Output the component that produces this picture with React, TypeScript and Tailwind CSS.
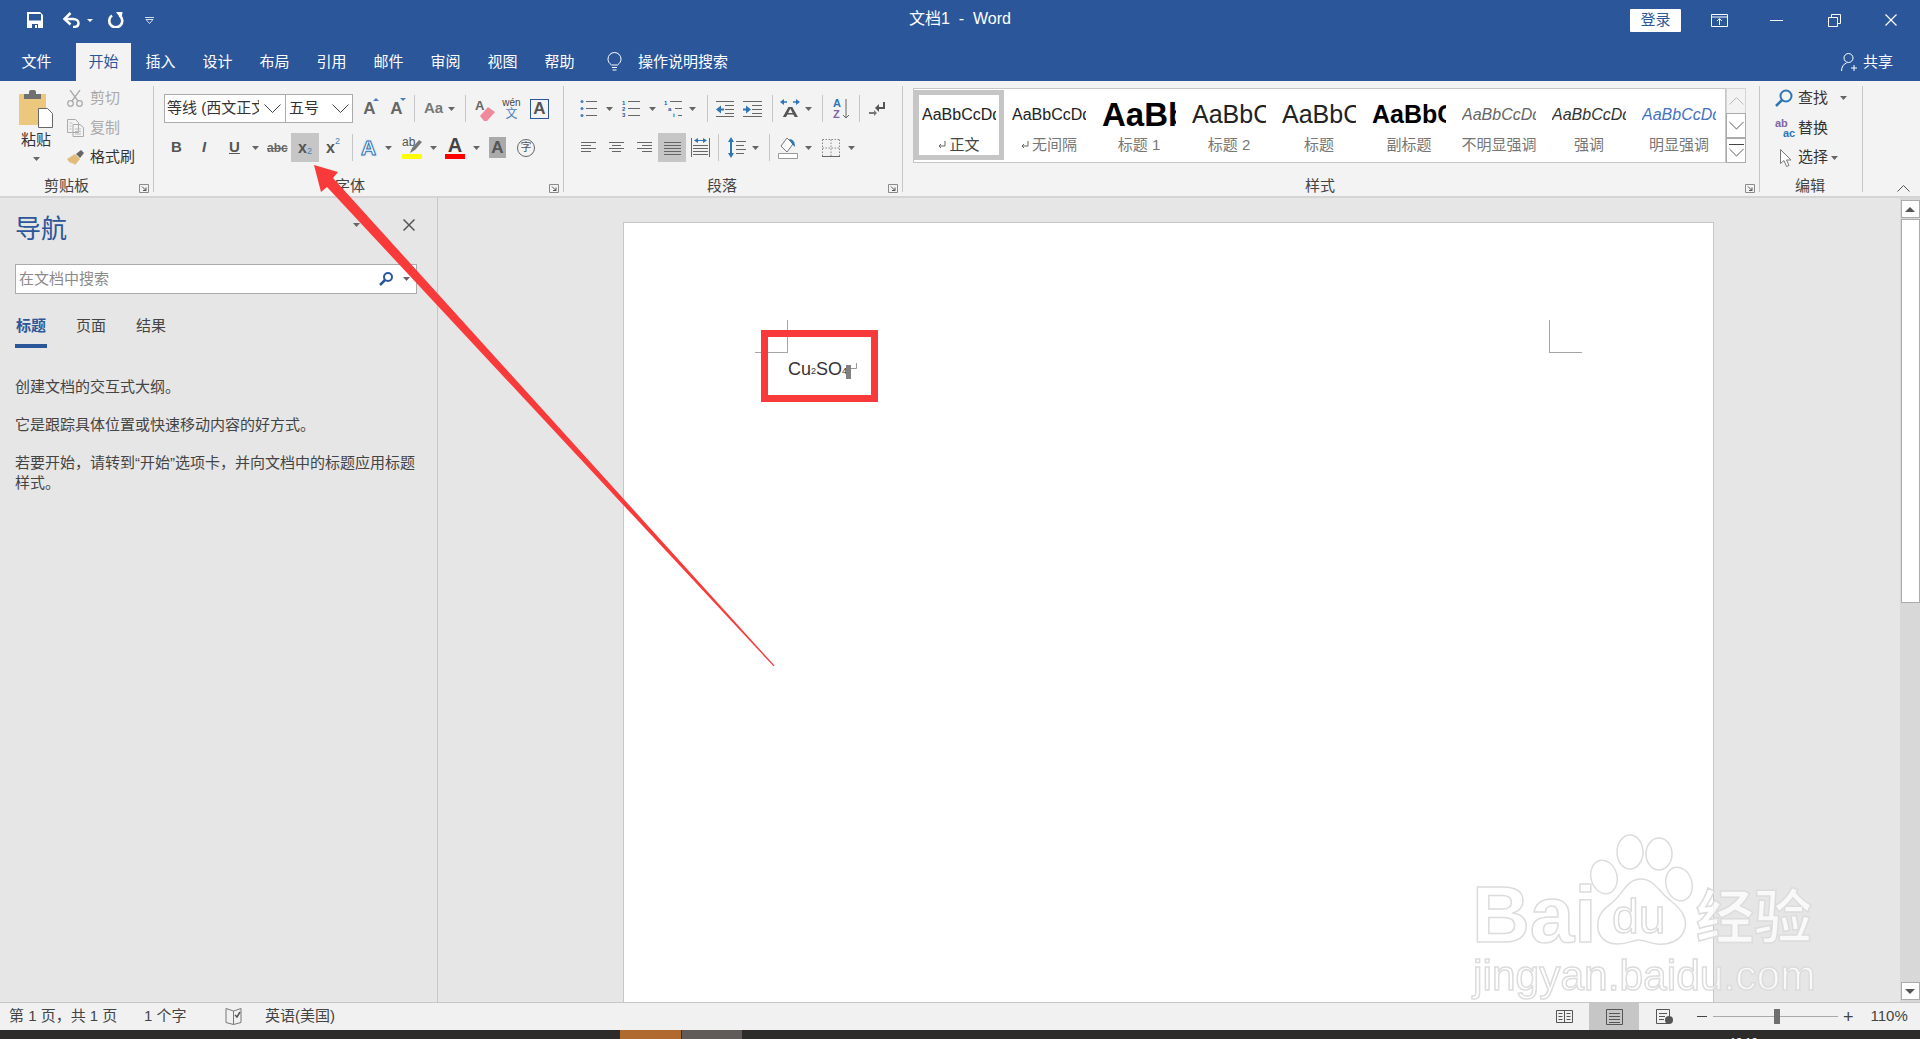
import type { ReactNode } from "react";

const tabs = ["开始", "插入", "设计", "布局", "引用", "邮件", "审阅", "视图", "帮助"];

function Ico({ w, h, className, children }: { w: number; h: number; className?: string; children: ReactNode }) {
	return (
		<svg width={w} height={h} viewBox={`0 0 ${w} ${h}`} fill="none" className={`shrink-0 ${className ?? ""}`}>
			{children}
		</svg>
	);
}

function Caret({ className }: { className?: string }) {
	return (
		<Ico w={7} h={4} className={className}>
			<path d="M0 0h7L3.500 4z" fill="#666" />
		</Ico>
	);
}

function Sep({ className }: { className?: string }) {
	return <div className={`h-[27px] w-px shrink-0 bg-[#c6c6c6] ${className ?? ""}`} />;
}

function Launcher() {
	return (
		<Ico w={10} h={9}>
			<path d="M.5 8.500V.5h9v8z" stroke="#8a8a8a" />
			<path d="M3 2.500l4 4M7 3.500v3H4" stroke="#555" />
		</Ico>
	);
}

function Chevron({ className }: { className?: string }) {
	return (
		<Ico w={17} h={9} className={className}>
			<path d="M.5.5l8 8 8-8" stroke="#444" />
		</Ico>
	);
}

// horizontal rules for the alignment buttons
function Lines({ rows, w = 15 }: { rows: [number, number, number][]; w?: number }) {
	return (
		<Ico w={w} h={14}>
			{rows.map(([x1, x2, y]) => (
				<path key={`${x1}-${y}`} d={`M${x1} ${y}.5H${x2}`} stroke="#666" />
			))}
		</Ico>
	);
}

function Group({
	label,
	labelClass,
	launcher = true,
	className,
	children,
}: {
	label: string;
	labelClass: string;
	launcher?: boolean;
	className: string;
	children: ReactNode;
}) {
	return (
		<div className={`mt-[5px] flex h-[106px] shrink-0 flex-col border-r border-[#c6c6c6] ${className}`}>
			<div className="h-[90px]">{children}</div>
			<div className="-mb-[4px] flex h-[20px] items-center pr-[4px]">
				<span className={`text-[15px] leading-[20px] text-[#444] ${labelClass}`}>{label}</span>
				{launcher && (
					<span className="ml-auto pt-[4px]">
						<Launcher />
					</span>
				)}
			</div>
		</div>
	);
}

function StyleItem({ caption, mark, preview, first }: { caption: string; mark?: boolean; preview: string; first?: boolean }) {
	return (
		<div
			className={`flex w-[90px] shrink-0 flex-col items-center ${
				first ? "mt-px h-[70px] pt-[3px] shadow-[inset_0_0_0_5px_#c6c6c6]" : "pt-[4px]"
			}`}
		>
			<div className="flex h-[44px] w-[74px] items-center overflow-hidden whitespace-nowrap">
				<span className={preview}>AaBbCcDd</span>
			</div>
			<div className={`-mt-[2px] flex h-[20px] items-center gap-[3px] text-[15px] ${first ? "text-[#444]" : "text-[#777]"}`}>
				{mark && (
					<Ico w={8} h={8}>
						<path d="M7 0v5H1M3 3L1 5l2 2" stroke="#666" />
					</Ico>
				)}
				{caption}
			</div>
		</div>
	);
}

function Ribbon() {
	return (
		<div className="flex h-[117px] shrink-0 border-b-2 border-[#d4d4d4] bg-[#f3f3f3]">
			<Group label="剪贴板" labelClass="ml-[44px]" className="w-[154px]">
				<div className="flex">
					<div className="flex w-[67px] flex-col items-center pl-[5px] pt-[4px]">
						<Ico w={34} h={38}>
							<path d="M0 4h27v31H0z" fill="#ecc87f" />
							<path d="M5 9V4h5V2q0-2 2-2h3q2 0 2 2v2h5v5z" fill="#707070" />
							<path d="M19.500 18.500h9l5 5v14h-14z" fill="#fff" stroke="#666" />
						</Ico>
						<span className="mt-[2px] text-[15px] leading-[20px] text-[#333]">粘贴</span>
						<Caret className="mt-[7px]" />
					</div>
					<div className="-mt-[3px] flex flex-col">
						<div className="flex h-[30px] items-center gap-[7px] text-[15px] text-[#aaa]">
							<Ico w={16} h={17}>
								<circle cx="3.500" cy="13.500" r="2.800" stroke="#aaa" strokeWidth="1.300" />
								<circle cx="12.500" cy="13.500" r="2.800" stroke="#aaa" strokeWidth="1.300" />
								<path d="M5 11L13 0M11 11L3 0" stroke="#aaa" strokeWidth="1.300" />
							</Ico>
							剪切
						</div>
						<div className="flex h-[30px] items-center gap-[6px] text-[15px] text-[#aaa]">
							<Ico w={17} h={18}>
								<path d="M.5.500h8l3 3v10H.5zM6 5.500h7l3.500 3v9H6z" stroke="#aaa" fill="#f3f3f3" />
								<path d="M8 10h6M8 12.500h6M8 15h6M2.500 4h3M2.500 7h2M2.500 10h2" stroke="#bbb" />
							</Ico>
							复制
						</div>
						<div className="flex h-[29px] items-center gap-[5px] text-[15px] text-[#333]">
							<Ico w={18} h={15}>
								<path d="M0 9l8-5 5 5-5 6-2-2-1 1-1-2-1 1z" fill="#e0bb7c" />
								<path d="M9 4l5-4 3 3-4 5z" fill="#666" />
							</Ico>
							格式刷
						</div>
					</div>
				</div>
			</Group>

			<Group label="字体" labelClass="ml-[181px]" className="w-[410px]">
				<div className="mt-[8px] flex h-[29px] items-center">
					<div className="ml-[10px] flex h-[29px] w-[122px] items-center justify-between overflow-hidden border border-[#ababab] bg-white pl-[2px] pr-[4px]">
						<span className="w-[92px] overflow-hidden whitespace-nowrap text-[15px] text-[#333]">等线 (西文正文)</span>
						<Chevron />
					</div>
					<div className="-ml-px flex h-[29px] w-[68px] items-center justify-between border border-[#ababab] bg-white pl-[3px] pr-[3px]">
						<span className="text-[15px] text-[#333]">五号</span>
						<Chevron />
					</div>
					<div className="relative ml-[9px] w-[15px] text-center text-[17px] font-bold text-[#666]">
						A
						<Ico w={6} h={3} className="absolute right-[-2px] top-[2px]">
							<path d="M0 3h6L3 0z" fill="#4a7ebb" />
						</Ico>
					</div>
					<div className="relative ml-[12px] w-[15px] text-center text-[17px] font-bold text-[#666]">
						A
						<Ico w={6} h={3} className="absolute right-[-2px] top-[2px]">
							<path d="M0 0h6L3 3z" fill="#4a7ebb" />
						</Ico>
					</div>
					<Sep className="ml-[10px]" />
					<span className="ml-[9px] w-[19px] whitespace-nowrap text-[15px] font-bold text-[#777]">Aa</span>
					<Caret className="ml-[5px]" />
					<Sep className="ml-[10px]" />
					<div className="relative ml-[9px] h-[24px] w-[20px]">
						<span className="absolute left-0 top-[-1px] text-[13px] font-bold text-[#666]">A</span>
						<Ico w={15} h={14} className="absolute bottom-0 right-0">
							<path d="M0 9l8-9 7 5-8 9H4z" fill="#ef8a9d" />
						</Ico>
					</div>
					<div className="ml-[8px] flex w-[17px] flex-col items-center">
						<span className="text-[10px] leading-[11px] text-[#444]">wén</span>
						<span className="text-[12px] leading-[13px] text-[#4a7ebb]">文</span>
					</div>
					<div className="ml-[10px] flex h-[20px] w-[19px] items-center justify-center border border-[#2b579a] text-[17px] font-bold text-[#555]">
						A
					</div>
				</div>
				<div className="mt-[10px] flex h-[29px] items-center">
					<span className="ml-[17px] w-[11px] text-[15px] font-bold text-[#555]">B</span>
					<span className="ml-[20px] w-[9px] text-[15px] font-bold italic text-[#555]">I</span>
					<span className="ml-[18px] w-[10px] text-[15px] font-bold text-[#555] underline">U</span>
					<Caret className="ml-[13px]" />
					<span className="ml-[8px] w-[20px] text-[12px] font-bold text-[#666] line-through">abc</span>
					<div className="ml-[4px] flex h-[29px] w-[28px] items-center justify-center bg-[#c6c6c6] text-[16px] font-bold text-[#555]">
						x<span className="mt-[8px] text-[9px] font-normal text-[#4a7ebb]">2</span>
					</div>
					<div className="ml-[7px] flex w-[14px] text-[16px] font-bold text-[#555]">
						x<span className="-mt-[1px] text-[9px] font-normal text-[#4a7ebb]">2</span>
					</div>
					<Sep className="ml-[12px]" />
					<span className="ml-[8px] w-[17px] text-[21px] font-bold text-white [-webkit-text-stroke:1px_#2f75b5] [text-shadow:0_0_3px_#9cc3ea]">A</span>
					<Caret className="ml-[7px]" />
					<div className="ml-[10px] flex h-[23px] w-[20px] flex-col">
						<div className="relative h-[18px]">
							<span className="absolute left-0 top-[-3px] text-[12px] text-[#555]">ab</span>
							<Ico w={12} h={14} className="absolute bottom-0 right-0">
								<path d="M0 13l2-5 7-8 3 2-7 8z" fill="#777" />
							</Ico>
						</div>
						<div className="h-[5px] bg-[#ffff00]" />
					</div>
					<Caret className="ml-[8px]" />
					<div className="ml-[8px] flex h-[23px] w-[20px] flex-col items-center">
						<span className="h-[18px] text-[20px] font-bold leading-[18px] text-[#444]">A</span>
						<div className="h-[5px] w-full bg-[#ff0000]" />
					</div>
					<Caret className="ml-[8px]" />
					<div className="ml-[9px] flex h-[21px] w-[17px] items-center justify-center bg-[#aaa] text-[17px] font-bold text-[#555]">
						A
					</div>
					<div className="ml-[11px] flex h-[18px] w-[18px] items-center justify-center rounded-full border border-[#666] text-[11px] text-[#555]">
						字
					</div>
				</div>
			</Group>

			<Group label="段落" labelClass="ml-[143px]" className="w-[339px]">
				<div className="mt-[8px] flex h-[29px] items-center">
					<Ico w={17} h={17} className="ml-[16px]">
						<path d="M6 1.500h11M6 8.500h11M6 15.500h11" stroke="#666" />
						<circle cx="2" cy="1.500" r="1.500" fill="#4a7ebb" />
						<circle cx="2" cy="8.500" r="1.500" fill="#4a7ebb" />
						<circle cx="2" cy="15.500" r="1.500" fill="#4a7ebb" />
					</Ico>
					<Caret className="ml-[9px]" />
					<Ico w={18} h={17} className="ml-[9px]">
						<path d="M6 1.500h12M6 8.500h12M6 15.500h12" stroke="#666" />
						<text x="0" y="4.500" fontSize="6" fontWeight="700" fill="#2b579a">1</text>
						<text x="0" y="11" fontSize="6" fontWeight="700" fill="#2b579a">2</text>
						<text x="0" y="17" fontSize="6" fontWeight="700" fill="#2b579a">3</text>
					</Ico>
					<Caret className="ml-[9px]" />
					<Ico w={20} h={17} className="ml-[8px]">
						<path d="M6 1.500h12M11 8.500h7M14 15.500h4" stroke="#666" />
						<text x="0" y="5" fontSize="6" fontWeight="700" fill="#2b579a">1</text>
						<text x="4" y="11" fontSize="6" fontWeight="700" fill="#2b579a">a</text>
						<text x="9" y="17" fontSize="6" fontWeight="700" fill="#2b579a">i</text>
					</Ico>
					<Caret className="ml-[5px]" />
					<Sep className="ml-[11px]" />
					<Ico w={18} h={16} className="ml-[8px]">
						<path d="M0 .5h18M9 4.500h9M9 8.500h9M9 12.500h9M0 15.500h18" stroke="#666" />
						<path d="M0 8.500l5-4v8z" fill="#2f75b5" />
						<path d="M4 8.500h4" stroke="#2f75b5" strokeWidth="2" />
					</Ico>
					<Ico w={19} h={16} className="ml-[9px]">
						<path d="M0 .5h19M9 4.500h10M9 8.500h10M9 12.500h10M0 15.500h19" stroke="#666" />
						<path d="M8 8.500l-5-4v8z" fill="#2f75b5" />
						<path d="M0 8.500h4" stroke="#2f75b5" strokeWidth="2" />
					</Ico>
					<Sep className="ml-[10px]" />
					<div className="relative ml-[7px] flex h-[20px] w-[20px] items-end justify-center text-[15px] font-bold leading-[14px] text-[#555]">
						<span className="scale-x-[1.5]">A</span>
						<Ico w={20} h={6} className="absolute left-0 top-0">
							<path d="M0 3l4-3v6zM20 3l-4-3v6z" fill="#2f75b5" />
							<path d="M3 3h4M13 3h4" stroke="#2f75b5" strokeWidth="1.500" />
						</Ico>
					</div>
					<Caret className="ml-[5px]" />
					<Sep className="ml-[10px]" />
					<div className="ml-[10px] flex h-[22px] w-[18px] items-center">
						<div className="flex flex-col text-[11px] font-bold leading-[11px]">
							<span className="text-[#2f75b5]">A</span>
							<span className="text-[#8064a2]">Z</span>
						</div>
						<Ico w={8} h={20} className="ml-[1px]">
							<path d="M4 0v19M1 16l3 3 3-3" stroke="#666" />
						</Ico>
					</div>
					<Sep className="ml-[8px]" />
					<Ico w={17} h={16} className="ml-[9px]">
						<path d="M15 1v6H8" stroke="#555" strokeWidth="2" />
						<path d="M10 3L6 7l4 4z" fill="#555" />
						<path d="M0 12h6" stroke="#777" strokeWidth="2" />
						<path d="M5 9l3 3-3 3z" fill="#777" />
					</Ico>
				</div>
				<div className="mt-[10px] flex h-[29px] items-center">
					<div className="ml-[17px]">
						<Lines rows={[[0, 15, 1], [0, 10, 4], [0, 15, 7], [0, 10, 10]]} />
					</div>
					<div className="ml-[13px]">
						<Lines rows={[[0, 15, 1], [3, 12, 4], [0, 15, 7], [3, 12, 10]]} />
					</div>
					<div className="ml-[13px]">
						<Lines rows={[[0, 15, 1], [5, 15, 4], [0, 15, 7], [5, 15, 10]]} />
					</div>
					<div className="ml-[6px] flex h-[29px] w-[28px] items-center justify-center bg-[#c6c6c6]">
						<Lines w={17} rows={[[0, 17, 1], [0, 17, 4], [0, 17, 7], [0, 17, 10], [0, 17, 13]]} />
					</div>
					<Ico w={19} h={19} className="ml-[5px]">
						<path d="M.5 0v19M18.500 0v19M4 2.500h11" stroke="#2f75b5" />
						<path d="M3 2.500l4-2.500v5zM16 2.500l-4-2.500v5z" fill="#2f75b5" />
						<path d="M2 7.500h15M2 10.500h15M2 13.500h15M2 16.500h15" stroke="#666" />
					</Ico>
					<Sep className="ml-[8px]" />
					<Ico w={18} h={21} className="ml-[9px]">
						<path d="M3 3v15" stroke="#2f75b5" strokeWidth="2" />
						<path d="M3 0l3 5H0zM3 21l3-5H0z" fill="#2f75b5" />
						<path d="M8 4.500h10M8 8.500h8M8 12.500h10M8 16.500h8" stroke="#666" />
					</Ico>
					<Caret className="ml-[6px]" />
					<Sep className="ml-[10px]" />
					<Ico w={20} h={22} className="ml-[8px]">
						<path d="M9 1L3 9l6 6 6-8z" fill="#fff" stroke="#777" />
						<path d="M11 2c4 0 6 3 6 8l-3-3z" fill="#2f75b5" />
						<path d="M.5 16.500h19v5H.5z" fill="#fff" stroke="#999" />
					</Ico>
					<Caret className="ml-[7px]" />
					<Ico w={18} h={18} className="ml-[10px]">
						<path d="M.5.500h17M.5.500v17M17.500.500v17M9 .5v17M.5 9h17" stroke="#888" strokeDasharray="1.500 1.500" />
						<path d="M0 17.500h18" stroke="#666" />
					</Ico>
					<Caret className="ml-[8px]" />
				</div>
			</Group>

			<Group label="样式" labelClass="ml-[402px]" className="w-[857px]">
				<div className="ml-[10px] mt-[2px] flex h-[75px] w-[833px]">
					<div className="flex w-[813px] border border-[#c6c6c6] bg-white">
						<StyleItem first mark caption="正文" preview="text-[16px] text-[#222]" />
						<StyleItem mark caption="无间隔" preview="text-[16px] text-[#222]" />
						<StyleItem caption="标题 1" preview="text-[33px] font-bold text-black" />
						<StyleItem caption="标题 2" preview="text-[25px] text-[#222]" />
						<StyleItem caption="标题" preview="text-[25px] text-[#222]" />
						<StyleItem caption="副标题" preview="text-[25px] font-bold text-black" />
						<StyleItem caption="不明显强调" preview="text-[16px] italic text-[#666]" />
						<StyleItem caption="强调" preview="text-[16px] italic text-[#333]" />
						<StyleItem caption="明显强调" preview="text-[16px] italic text-[#4472c4]" />
					</div>
					<div className="flex w-[20px] flex-col">
						<div className="flex h-[26px] items-center justify-center border border-[#d4d4d4] bg-[#f3f3f3]">
							<Ico w={15} h={8}>
								<path d="M.5 7.500l7-7 7 7" stroke="#bbb" />
							</Ico>
						</div>
						<div className="-mt-px flex h-[25px] items-center justify-center border border-[#ababab] bg-white">
							<Chevron className="w-[15px]" />
						</div>
						<div className="flex h-[25px] flex-col items-center justify-center gap-[3px] border border-[#ababab] bg-white">
							<div className="h-px w-[15px] bg-[#444]" />
							<Chevron className="w-[15px]" />
						</div>
					</div>
				</div>
			</Group>

			<Group label="编辑" labelClass="ml-[35px]" launcher={false} className="w-[103px]">
				<div className="-mt-[3px] flex flex-col">
					<div className="flex h-[30px] items-center text-[15px] text-[#333]">
						<Ico w={18} h={18} className="ml-[15px]">
							<circle cx="11" cy="7" r="5.500" stroke="#2f75b5" strokeWidth="2" />
							<path d="M7 11l-6 6" stroke="#2f75b5" strokeWidth="2.500" />
						</Ico>
						<span className="ml-[5px]">查找</span>
						<Caret className="ml-[12px]" />
					</div>
					<div className="flex h-[30px] items-center text-[15px] text-[#333]">
						<div className="ml-[15px] flex h-[20px] w-[20px] flex-col text-[11px] font-bold leading-[10px]">
							<span className="text-[#8064a2]">ab</span>
							<span className="pl-[8px] text-[#2f75b5]">ac</span>
						</div>
						<span className="ml-[3px]">替换</span>
					</div>
					<div className="flex h-[29px] items-center text-[15px] text-[#333]">
						<Ico w={11} h={18} className="ml-[20px]">
							<path d="M.5.500v14l3.500-3 2.500 6 2.500-1-2.500-5.500h4.500z" fill="#fff" stroke="#777" />
						</Ico>
						<span className="ml-[7px]">选择</span>
						<Caret className="ml-[3px]" />
					</div>
				</div>
			</Group>

			<div className="flex flex-1 items-end justify-end pb-[4px] pr-[10px]">
				<Ico w={13} h={7}>
					<path d="M.5 6.500l6-6 6 6" stroke="#555" />
				</Ico>
			</div>
		</div>
	);
}

function NavPane() {
	return (
		<div className="w-[438px] shrink-0 border-r border-[#c6c6c6] bg-[#e6e6e6] pl-[15px] text-[#444]">
			<div className="flex h-[67px] items-start pt-[13px]">
				<span className="text-[26px] leading-[36px] text-[#2b579a]">导航</span>
				<Caret className="ml-[285px] mt-[12px] w-[9px]" />
				<Ico w={12} h={12} className="ml-[42px] mt-[8px]">
					<path d="M.5.500l11 11M11.500.500l-11 11" stroke="#555" strokeWidth="1.500" />
				</Ico>
			</div>
			<div className="-mt-px flex h-[30px] w-[402px] items-center border border-[#ababab] bg-white pl-[3px]">
				<span className="text-[15px] text-[#8a8a8a]">在文档中搜索</span>
				<Ico w={14} h={14} className="ml-auto">
					<circle cx="9" cy="5" r="4" stroke="#2b579a" strokeWidth="2" />
					<path d="M6 8l-5 5" stroke="#2b579a" strokeWidth="2.500" />
				</Ico>
				<Caret className="ml-[10px] mr-[6px]" />
			</div>
			<div className="mt-[21px] flex h-[33px] text-[15px]">
				<div className="w-[32px] border-b-4 border-[#2b579a] text-center font-bold leading-[22px] text-[#2b579a]">标题</div>
				<div className="ml-[28px] w-[32px] text-center leading-[22px]">页面</div>
				<div className="ml-[28px] w-[32px] text-center leading-[22px]">结果</div>
			</div>
			<div className="mt-[29px] w-[404px] text-[15px] leading-[20px]">
				<p>创建文档的交互式大纲。</p>
				<p className="mt-[18px]">它是跟踪具体位置或快速移动内容的好方式。</p>
				<p className="mt-[18px]">若要开始，请转到“开始”选项卡，并向文档中的标题应用标题样式。</p>
			</div>
		</div>
	);
}

function Page() {
	return (
		<div className="mt-[24px] h-[800px] w-[1091px] shrink-0 border border-[#c6c6c6] bg-white">
			<div className="flex justify-between pl-[131px] pr-[131px] pt-[97px]">
				<div className="h-[33px] w-[33px] border-b border-r border-[#a6a6a6]" />
				<div className="h-[33px] w-[33px] border-b border-l border-[#a6a6a6]" />
			</div>
			<div className="ml-[164px] mt-px flex h-[30px] items-center whitespace-nowrap text-[18px] text-[#333]">
				Cu<span className="mt-[6px] text-[9px]">2</span>SO<span className="mt-[6px] text-[9px]">4</span>
				<div className="-ml-px mt-[5px] h-[14px] w-[5px] bg-[#808080]" />
				<Ico w={6} h={7} className="-mt-[5px]">
					<path d="M5.500 0v5.500H0" stroke="#999" />
				</Ico>
			</div>
		</div>
	);
}

function Scrollbar() {
	return (
		<div className="flex w-[20px] shrink-0 flex-col items-center bg-[#d8d8d8]">
			<div className="mt-[2px] flex h-[18px] w-[19px] items-center justify-center border border-[#ababab] bg-white">
				<Ico w={10} h={5}>
					<path d="M0 5h10L5 0z" fill="#555" />
				</Ico>
			</div>
			<div className="mt-px h-[384px] w-[19px] border border-[#ababab] bg-white" />
			<div className="mt-auto mb-[2px] flex h-[18px] w-[19px] items-center justify-center border border-[#ababab] bg-white">
				<Ico w={10} h={5}>
					<path d="M0 0h10L5 5z" fill="#555" />
				</Ico>
			</div>
		</div>
	);
}

function StatusBar() {
	return (
		<div className="flex h-[28px] shrink-0 items-center border-t border-[#c6c6c6] bg-[#f1f1f1] text-[15px] text-[#444]">
			<span className="ml-[9px] w-[109px] whitespace-nowrap">第 1 页，共 1 页</span>
			<span className="ml-[26px] w-[42px] whitespace-nowrap">1 个字</span>
			<Ico w={17} h={17} className="ml-[39px]">
				<path d="M8.500 3L1 .5v14l7.500 2 7.500-2V.5zM8.500 3v13.500" stroke="#777" />
				<path d="M10 7l2 2 3-5" stroke="#555" strokeWidth="1.500" />
			</Ico>
			<span className="ml-[23px] whitespace-nowrap">英语(美国)</span>
			<Ico w={17} h={15} className="ml-[1221px]">
				<path d="M.5 1.500h16v12H.5zM8.500 1.500v12M2.500 4.500h4M2.500 7.500h4M2.500 10.500h4M10.500 4.500h4M10.500 7.500h4M10.500 10.500h4" stroke="#555" />
			</Ico>
			<div className="ml-[16px] flex h-[27px] w-[50px] items-center justify-center bg-[#c6c6c6]">
				<Ico w={17} h={16}>
					<path d="M.5.500h16v15H.5zM3 4.500h11M3 7.500h11M3 10.500h11M3 13.500h11" stroke="#555" />
				</Ico>
			</div>
			<Ico w={17} h={15} className="ml-[17px]">
				<path d="M.5.500h13v14H.5zM3 4.500h8M3 7.500h6M3 10.500h5" stroke="#555" />
				<circle cx="13" cy="11" r="4" fill="#555" />
			</Ico>
			<div className="ml-[24px] h-px w-[10px] bg-[#444]" />
			<div className="ml-[6px] flex h-[16px] w-[125px] items-center">
				<div className="h-px w-[61px] bg-[#aaa]" />
				<div className="h-[15px] w-[6px] bg-[#6e6e6e]" />
				<div className="h-px flex-1 bg-[#aaa]" />
			</div>
			<span className="ml-[5px] text-[18px] leading-none text-[#444]">+</span>
			<span className="ml-[17px] text-[15px]">110%</span>
		</div>
	);
}

function Overlay() {
	return (
		<svg width={1920} height={1039} viewBox="0 0 1920 1039" fill="none" className="pointer-events-none absolute left-0 top-0">
			<g className="[filter:blur(0.5px)]" stroke="#dcdcdc" strokeWidth="1.500" fill="#fff" fillOpacity="0.75">
				<ellipse cx="1604" cy="877" rx="13" ry="17" transform="rotate(-15 1604 877)" />
				<ellipse cx="1630" cy="852" rx="13" ry="17" />
				<ellipse cx="1659" cy="854" rx="13" ry="16" />
				<ellipse cx="1679" cy="884" rx="13" ry="17" transform="rotate(-15 1679 884)" />
				<path d="M1641 879c14 0 18 14 30 22 12 9 16 19 14 27-3 13-16 17-28 16-9-1-12-4-18-4-6 0-11 4-21 4-12 0-22-7-20-22 1-11 10-15 17-22 9-9 13-21 26-21z" />
				<text x="1472" y="942" fontSize="80" fontWeight="700" fontFamily="Liberation Sans">Bai</text>
				<text x="1612" y="933" fontSize="48" fontFamily="Liberation Sans">du</text>
				<text x="1696" y="938" fontSize="58" fontWeight="700" fontFamily="Noto Sans CJK SC">经验</text>
				<text x="1473" y="990" fontSize="42.500" fontFamily="Liberation Sans">jingyan.baidu.com</text>
			</g>
			<path d="M764.500 333.500h110v65h-110z" stroke="#f93a3a" strokeWidth="7" />
			<path d="M314 165l24 7-5 6 441.500 487.500-1 .8L327 187l-6 5z" fill="#f93a3a" />
		</svg>
	);
}

export default function App() {
	return (
		<div className="relative flex h-[1039px] w-[1920px] flex-col overflow-hidden bg-[#e6e6e6] [font-family:'Liberation_Sans','Noto_Sans_CJK_SC',sans-serif]">
			<header className="h-[81px] shrink-0 bg-[#2b579a] text-white">
				<div className="grid h-[40px] grid-cols-[1fr_auto_1fr] items-center">
					<div className="flex items-center pl-[27px]">
						<Ico w={16} h={16}>
							<path d="M0 0h13l3 3v13H0z" fill="#fff" />
							<path d="M2 2h12v6.500H2z" fill="#2b579a" />
							<path d="M5 12h6v4H5z" fill="#2b579a" />
							<path d="M8 13h2v3H8z" fill="#fff" />
						</Ico>
						<Ico w={19} h={16} className="ml-[19px]">
							<path d="M3 7h8c3.500 0 5.500 2 5.500 4.200S14.500 15 11 15" stroke="#fff" strokeWidth="2.500" />
							<path d="M8.500 1L2.500 7l6 5.500" stroke="#fff" strokeWidth="2.500" />
						</Ico>
						<Ico w={6} h={3} className="ml-[6px]">
							<path d="M0 0h6L3 3z" fill="#fff" />
						</Ico>
						<Ico w={17} h={16} className="ml-[14px]">
							<path d="M5 3.500a6.500 6.500 0 1 0 7.500 0" stroke="#fff" strokeWidth="2.600" />
							<path d="M9 0l6.500 0-1 7.500z" fill="#fff" />
						</Ico>
						<Ico w={9} h={7} className="ml-[21px]">
							<path d="M0 .5h9M1 2.500h7L4.500 6.500z" stroke="#fff" strokeWidth="0.800" />
						</Ico>
					</div>
					<div className="-mt-[3px] text-[16px]">文档1&nbsp; -&nbsp; Word</div>
					<div className="flex items-center justify-end pr-[23px]">
						<div className="flex h-[23px] w-[51px] items-center justify-center rounded-[1px] bg-white text-[15px] text-[#2b579a]">
							登录
						</div>
						<Ico w={17} h={13} className="ml-[30px]">
							<path d="M.5.500h16v12H.5zM.5 3h16M8.500 11V5M6 7l2.500-2.500L11 7" stroke="#fff" />
						</Ico>
						<div className="ml-[42px] h-px w-[13px] bg-white" />
						<Ico w={13} h={13} className="ml-[45px]">
							<path d="M3.500 3V.5h9v9H10M.5 3.500h9v9h-9z" stroke="#fff" />
						</Ico>
						<Ico w={12} h={12} className="ml-[44px]">
							<path d="M.5.500l11 11M11.500.500l-11 11" stroke="#fff" strokeWidth="1.200" />
						</Ico>
					</div>
				</div>
				<div className="flex h-[41px] items-end pl-[9px]">
					<div className="flex h-[38px] w-[55px] items-center justify-center text-[15px]">文件</div>
					<div className="ml-[12px] flex items-end gap-[2px]">
						{tabs.map((tab) => (
							<div
								key={tab}
								className={`flex h-[38px] w-[55px] items-center justify-center text-[15px] ${
									tab === "开始" ? "bg-[#f3f3f3] text-[#2b579a]" : "text-white"
								}`}
							>
								{tab}
							</div>
						))}
					</div>
					<div className="ml-[20px] flex h-[38px] items-center gap-[16px] text-[15px]">
						<Ico w={15} h={20}>
							<path d="M4.500 13C2 11 1 9.500 1 7a6.500 6.500 0 0 1 13 0c0 2.500-1 4-3.500 6zM5 15.500h5M5.500 18h4" stroke="#fff" />
						</Ico>
						操作说明搜索
					</div>
					<div className="ml-auto flex h-[38px] items-center gap-[5px] pr-[27px] text-[15px]">
						<Ico w={17} h={18}>
							<circle cx="7.500" cy="5" r="4.500" stroke="#fff" />
							<path d="M.5 18c0-4 2-7 5-8M13 12v6M10 15h6" stroke="#fff" />
						</Ico>
						共享
					</div>
				</div>
			</header>

			<Ribbon />

			<main className="flex h-[804px] shrink-0">
				<NavPane />
				<div className="flex min-w-0 flex-1 overflow-hidden pl-[185px]">
					<Page />
				</div>
				<Scrollbar />
			</main>

			<StatusBar />

			<div className="flex h-[9px] shrink-0 bg-[#2e2c2a]">
				<div className="ml-[620px] w-[61px] bg-[#b06a30]" />
				<div className="ml-px w-[60px] bg-[#605a58]" />
				<div className="ml-[988px] overflow-hidden pt-[6px] text-[11px] leading-[12px] text-white">12:12</div>
			</div>

			<Overlay />
		</div>
	);
}
